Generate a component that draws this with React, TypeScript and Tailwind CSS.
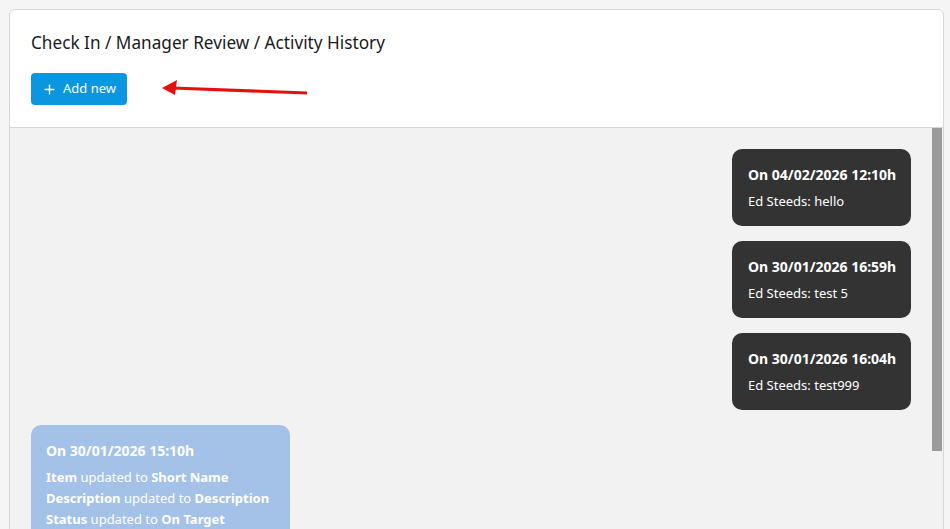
import { Plus } from "lucide-react";

type Change = { field: string; value: string };

const notes = [
  { when: "On 04/02/2026 12:10h", text: "Ed Steeds: hello" },
  { when: "On 30/01/2026 16:59h", text: "Ed Steeds: test 5" },
  { when: "On 30/01/2026 16:04h", text: "Ed Steeds: test999" },
];

const changes: Change[] = [
  { field: "Item", value: "Short Name" },
  { field: "Description", value: "Description" },
  { field: "Status", value: "On Target" },
];

function Arrow() {
  return (
    <svg
      className="absolute left-[141px] top-[66px]"
      width="170"
      height="28"
      viewBox="0 0 170 28"
    >
      <line x1="156" y1="17" x2="22" y2="12" stroke="#e41010" strokeWidth="3.2" />
      <polygon points="11,12 26,4 24,19" fill="#e41010" />
    </svg>
  );
}

export default function App() {
  return (
    <div
      className="w-[950px] h-[529px] bg-[#f5f5f5] pl-[9px] pr-[6px] pt-[9px] overflow-hidden"
      style={{ fontFamily: '"Noto Sans", "Open Sans", sans-serif' }}
    >
      <div className="h-[525px] flex flex-col bg-white border border-[#d6d6d6] rounded-[6px] overflow-hidden">
        <div className="relative px-[21px] pt-[21px] pb-[22px] border-b border-[#d6d6d6]">
          <h1 className="text-[17.2px] leading-[24px] text-[#1a1a1a]">
            Check In / Manager Review / Activity History
          </h1>
          <button className="mt-[18px] h-[32px] px-[11px] flex items-center gap-[6px] bg-[#0b96e0] text-white text-[13px] rounded-[4px]">
            <Plus size={15} strokeWidth={2.2} />
            Add new
          </button>
          <Arrow />
        </div>

        <div className="flex-1 flex bg-[#f2f2f2] overflow-hidden">
          <div className="flex-1 pl-[21px] pr-[21px] pt-[21px] flex flex-col gap-[15px]">
            {notes.map((n) => (
              <div
                key={n.when}
                className="self-end shrink-0 w-[179px] h-[77px] rounded-[10px] bg-[#333333] text-white pl-[16px] pt-[16px] whitespace-nowrap"
              >
                <div className="text-[14px] leading-[20px] font-bold">{n.when}</div>
                <div className="mt-[6px] text-[13px] leading-[20px]">{n.text}</div>
              </div>
            ))}
            <div className="self-start shrink-0 w-[259px] rounded-[10px] bg-[#a4c2e8] text-white pl-[15px] pt-[16px] pb-[16px] whitespace-nowrap">
              <div className="text-[14px] leading-[20px] font-bold">On 30/01/2026 15:10h</div>
              <div className="mt-[6px] text-[13px] leading-[21px]">
                {changes.map((c) => (
                  <div key={c.field}>
                    <b>{c.field}</b> updated to <b>{c.value}</b>
                  </div>
                ))}
              </div>
            </div>
          </div>
          <div className="w-[10px] mr-[1px]">
            <div className="h-[323px] bg-[#9a9a9a]" />
          </div>
        </div>
      </div>
    </div>
  );
}
